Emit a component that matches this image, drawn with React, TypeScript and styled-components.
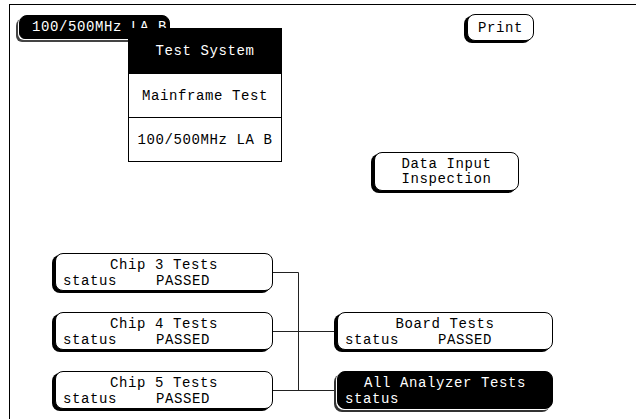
import styled, { createGlobalStyle, css } from 'styled-components';

const GlobalStyle = createGlobalStyle`
  html, body {
    margin: 0;
    background: #fff;
  }
  body {
    font-family: "Liberation Mono", "DejaVu Sans Mono", monospace;
    font-size: 14px;
    letter-spacing: 0.6px;
    color: #000;
  }
`;

interface ChipTest {
    title: string;
    status: string;
}

const chipTests: Array<ChipTest> = [
    { title: 'Chip 3 Tests', status: 'PASSED' },
    { title: 'Chip 4 Tests', status: 'PASSED' },
    { title: 'Chip 5 Tests', status: 'PASSED' },
];

export default function App() {
    return (
        <>
            <GlobalStyle />
            <Screen>
                <TopRow>
                    <TabWrap>
                        <ModuleTab>100/500MHz LA B</ModuleTab>
                        <Menu>
                            <MenuItem selected>Test System</MenuItem>
                            <MenuItem>Mainframe Test</MenuItem>
                            <MenuItem>100/500MHz LA B</MenuItem>
                        </Menu>
                    </TabWrap>
                    <PrintButton>Print</PrintButton>
                </TopRow>

                <InspectButton>
                    <span>Data Input</span>
                    <span>Inspection</span>
                </InspectButton>

                <Diagram>
                    {chipTests.map((chip, idx) => (
                        <TestNode key={`chip_${idx}`} $row={idx + 1} $col={1}>
                            <NodeTitle>{chip.title}</NodeTitle>
                            <NodeStatus>
                                <StatusLabel>status</StatusLabel>
                                <span>{chip.status}</span>
                            </NodeStatus>
                        </TestNode>
                    ))}
                    <Wires viewBox="0 0 64 156" width="64" height="156">
                        <path d="M0 19.5H25.5V137.5M0 78.5H64M0 137.5H64" fill="none" stroke="#222" strokeWidth="1" />
                    </Wires>
                    <TestNode $row={2} $col={3}>
                        <NodeTitle>Board Tests</NodeTitle>
                        <NodeStatus>
                            <StatusLabel>status</StatusLabel>
                            <span>PASSED</span>
                        </NodeStatus>
                    </TestNode>
                    <TestNode $row={3} $col={3} $dark>
                        <NodeTitle>All Analyzer Tests</NodeTitle>
                        <NodeStatus>
                            <StatusLabel>status</StatusLabel>
                        </NodeStatus>
                    </TestNode>
                </Diagram>
            </Screen>
        </>
    );
}

const raised = css<{ $dark?: boolean }>`
  border: 1px solid #000;
  border-radius: 8px;
  background: ${p => (p.$dark ? '#000' : '#fff')};
  color: ${p => (p.$dark ? '#fff' : '#000')};
  box-shadow: ${p => (p.$dark ? '-1px 1px 0 #fff, -3px 3px 0 #333' : '-3px 2px 0 #000')};
`;

const Screen = styled.div`
  margin: 4px 0 0 9px;
  height: 415px;
  border-top: 1px solid #000;
  border-left: 1px solid #000;
  box-sizing: border-box;
  overflow: hidden;
`;

const TopRow = styled.div`
  display: flex;
  align-items: flex-start;
  height: 27px;
  padding-top: 9px;
`;

const TabWrap = styled.div`
  position: relative;
  margin: 1px 0 0 9px;
`;

const ModuleTab = styled.div`
  ${raised}
  width: 151px;
  height: 24px;
  box-sizing: border-box;
  padding-left: 12px;
  line-height: 22px;
  white-space: pre;
  border-radius: 8px 8px 8px 6px;
  background: #000;
  color: #fff;
  box-shadow: -1px 1px 0 #fff, -3px 3px 0 #444;
`;

const Menu = styled.div`
  position: absolute;
  left: 109px;
  top: 13px;
  width: 154px;
  border: 1px solid #000;
  background: #fff;
  box-sizing: border-box;
  z-index: 2;
`;

const MenuItem = styled.div<{ selected?: boolean }>`
  height: 44px;
  display: flex;
  align-items: center;
  justify-content: center;
  white-space: pre;
  background: ${p => (p.selected ? '#000' : '#fff')};
  color: ${p => (p.selected ? '#fff' : '#000')};
  & + & {
    border-top: 1px solid #000;
    height: 43px;
  }
`;

const PrintButton = styled.div`
  ${raised}
  margin-left: 297px;
  width: 67px;
  height: 27px;
  box-sizing: border-box;
  text-align: center;
  line-height: 26px;
`;

const InspectButton = styled.div`
  ${raised}
  margin: 111px 0 0 364px;
  width: 145px;
  height: 39px;
  box-sizing: border-box;
  display: flex;
  flex-direction: column;
  align-items: center;
  justify-content: center;
  line-height: 15px;
`;

const Diagram = styled.div`
  display: grid;
  grid-template-columns: 218px 64px 216px;
  grid-template-rows: repeat(3, 38px);
  row-gap: 21px;
  margin: 62px 0 0 45px;
`;

const TestNode = styled.div<{ $row: number; $col: number; $dark?: boolean }>`
  ${raised}
  grid-row: ${p => p.$row};
  grid-column: ${p => p.$col};
  box-sizing: border-box;
  padding: 3px 0 0 7px;
  line-height: 16px;
  white-space: pre;
`;

const NodeTitle = styled.div`
  text-align: center;
  padding-right: 7px;
`;

const NodeStatus = styled.div`
  display: flex;
`;

const StatusLabel = styled.span`
  width: 93px;
`;

const Wires = styled.svg`
  grid-row: 1 / 4;
  grid-column: 2;
  display: block;
`;
